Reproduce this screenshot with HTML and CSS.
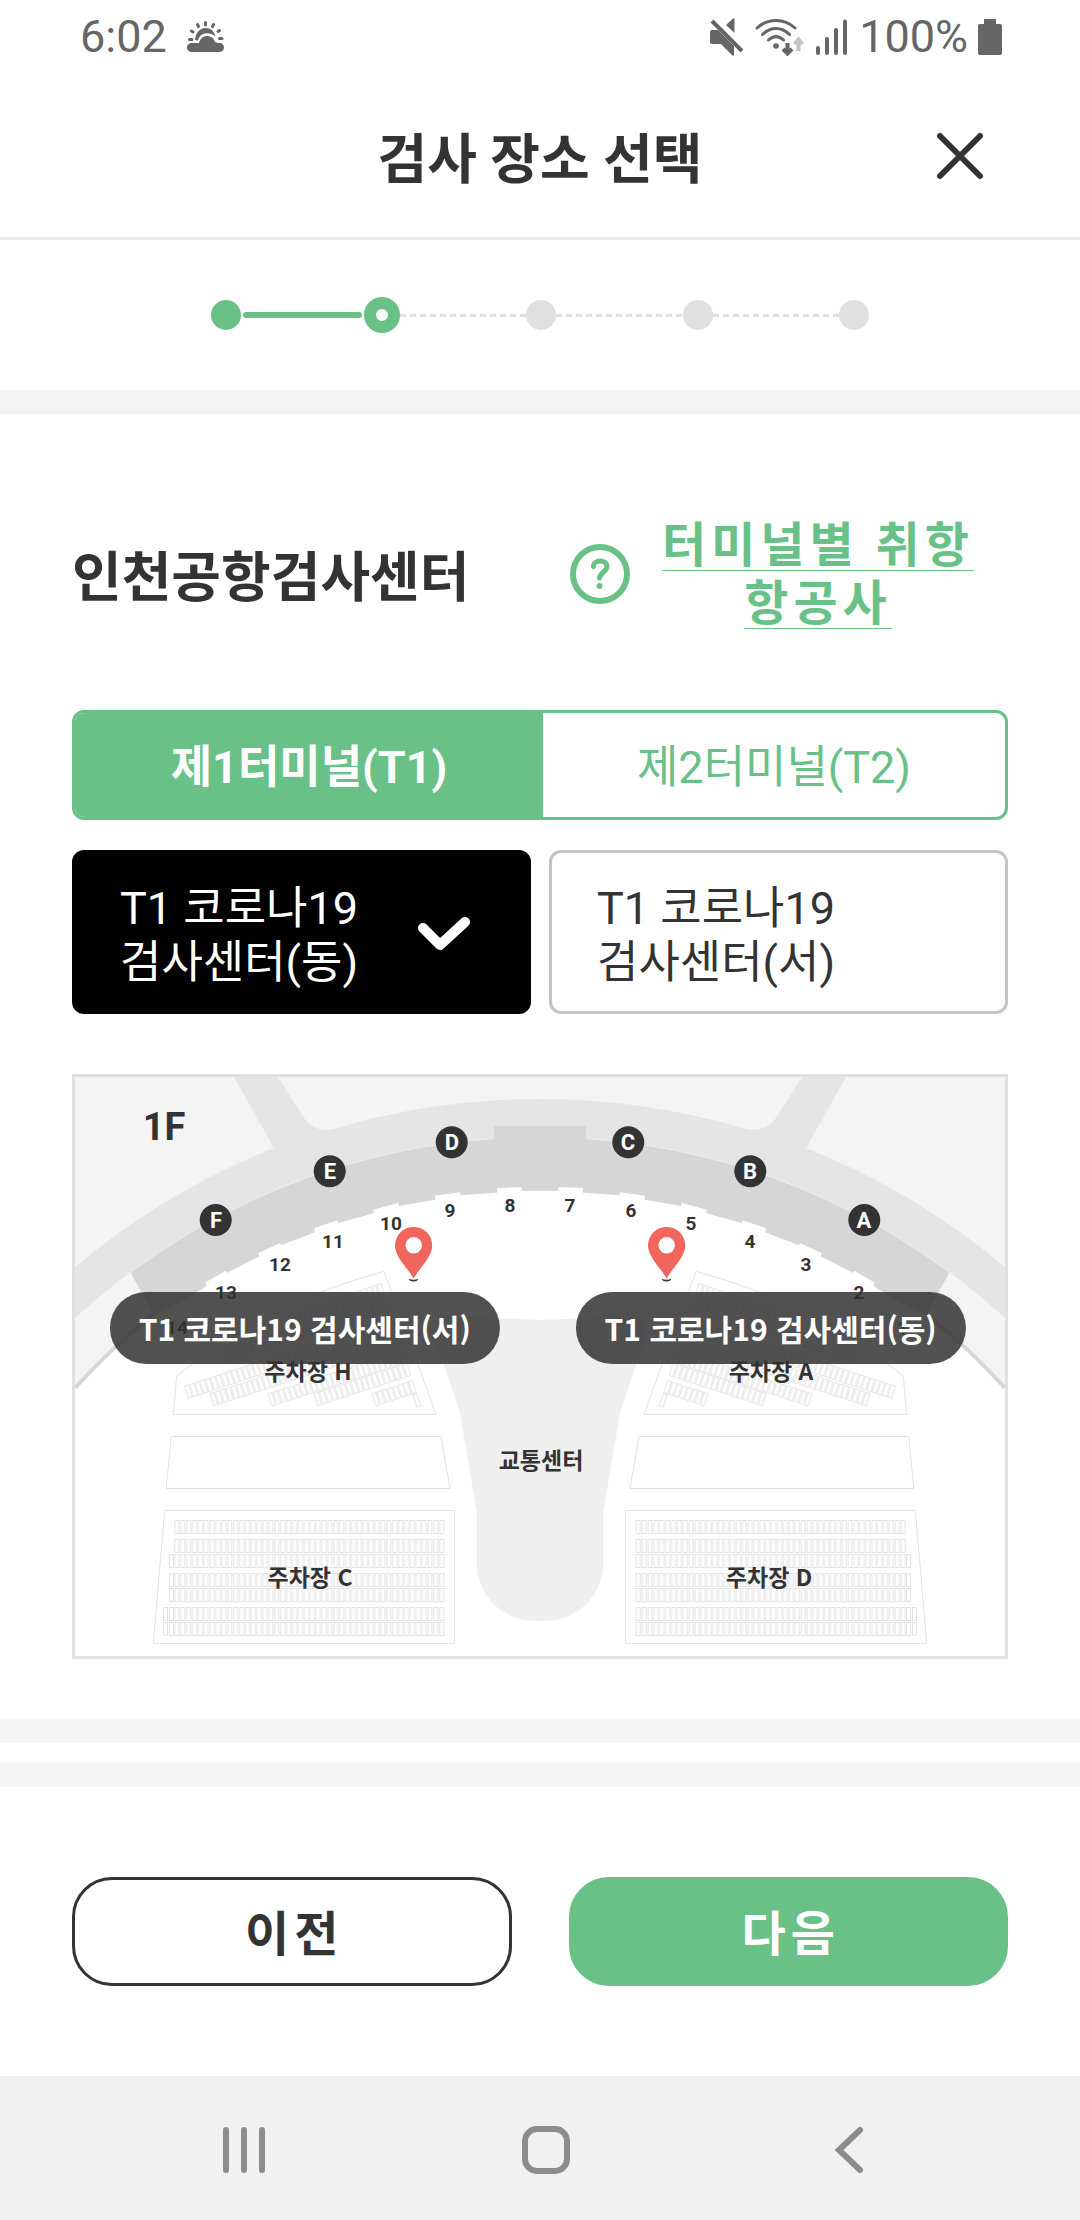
FILE: index.html
```html
<!DOCTYPE html>
<html lang="ko">
<head>
<meta charset="utf-8">
<meta name="viewport" content="width=device-width, initial-scale=1">
<title>검사 장소 선택</title>
<link rel="stylesheet" href="styles.css">
</head>
<body>
<div class="status">
  <div class="status-side">
    <span>6:02</span>
    <svg class="weather" width="38" height="34" viewBox="0 0 38 34" aria-hidden="true">
      <path d="M5 32a4.500 4.500 0 0 1-1-9h8c1-4 4-7 8-7s7 2.500 8 6l3 1h1.500a4.500 4.500 0 0 1 0 9z"/>
      <path d="M8 20C9 11 14 8 18.500 8c5 0 8.500 3 10 8.500C23 12 13 11.500 11 20.500z"/>
      <path class="rays" d="M18.500 2.500v2.500M10.500 4.500l1 2M26.500 4.500l-1 2M4.500 11l1.500 1M32.500 10.500l-1.500 1M2.500 19.500h2.500M32.500 18.500h2.500"/>
    </svg>
  </div>
  <div class="status-side status-right">
    <svg width="36" height="38" viewBox="0 0 36 38" aria-hidden="true">
      <path d="M1 14q0-2 2-2h6L25 28v9.500h-1.500L12 26H3q-2 0-2-2zM17 7l7-6.500h1.500V15z"/>
      <path class="line" d="M3 3l30 30"/>
    </svg>
    <svg class="wifi" width="50" height="38" viewBox="0 0 50 38" aria-hidden="true">
      <path class="arc" d="M2 10c11-10 27-10 38 0M7.500 16.500c8-8 19-8 27 0M13.500 22c5-4.500 10-4.500 15 0"/>
      <circle cx="21" cy="28" r="2.800"/>
      <path class="arrow" d="M32.500 25v10M28 31l4.500 4.500L37 31"/>
      <path class="arrow faint" d="M43.500 33V23M39.500 26l4-4.500 4 4.500"/>
    </svg>
    <svg class="signal" width="34" height="36" viewBox="0 0 34 36" aria-hidden="true">
      <path d="M3 29v5M12 20v14M21 11v23M30 2.500v31.500"/>
    </svg>
    <span>100%</span>
    <svg class="battery" width="24" height="36" viewBox="0 0 24 36" aria-hidden="true">
      <path d="M6 0h12v5h4q2 0 2 2v27q0 2-2 2H2q-2 0-2-2V7q0-2 2-2h4z"/>
    </svg>
  </div>
</div>

<header class="header">
  <h1 class="title">검사 장소 선택</h1>
  <button class="close" type="button" aria-label="닫기">
    <svg width="48" height="48" viewBox="0 0 48 48" aria-hidden="true"><path d="M4 4l40 40M44 4L4 44"/></svg>
  </button>
</header>

<main class="main">
  <div class="stepper">
    <span class="dot done"></span><span class="bar"></span>
    <span class="dot current"></span><span class="dash"></span>
    <span class="dot"></span><span class="dash"></span>
    <span class="dot"></span><span class="dash"></span>
    <span class="dot"></span>
  </div>
  <div class="band"></div>

  <section class="place">
    <div class="place-head">
      <h2 class="title">인천공항검사센터</h2>
      <div class="help">
        <svg width="60" height="60" viewBox="0 0 60 60" aria-hidden="true">
          <circle cx="30" cy="30" r="27" stroke-width="6"/>
          <path d="M23.500 22.500c0-7 13-7.500 13.500 0 0 5-7.500 6.500-7.500 11.500" stroke-width="5"/>
          <circle class="fill" cx="29.500" cy="42" r="3"/>
        </svg>
        <a class="help-link" href="#">터미널별 취항 항공사</a>
      </div>
    </div>

    <div class="tabs" role="tablist">
      <button class="tab on" type="button" role="tab" aria-selected="true">제1터미널(T1)</button>
      <button class="tab" type="button" role="tab" aria-selected="false">제2터미널(T2)</button>
    </div>

    <div class="centers">
      <button class="center on" type="button" aria-pressed="true">
        <span>T1 코로나19<br>검사센터(동)</span>
        <svg width="54" height="36" viewBox="0 0 54 36" aria-hidden="true"><path d="M6 12l17 17L48 6"/></svg>
      </button>
      <button class="center" type="button" aria-pressed="false">
        <span>T1 코로나19<br>검사센터(서)</span>
      </button>
    </div>

    <div class="map">
      <svg class="plan" viewBox="0 0 930 579" role="img" aria-label="1F">
        <defs>
          <pattern id="stall" patternUnits="userSpaceOnUse" x="99" y="0" width="5.890" height="20">
            <rect x="0.800" y="0.500" width="4" height="13" class="stroke"/>
          </pattern>
          <pattern id="stall-a" patternUnits="userSpaceOnUse" x="6" y="0" width="5.500" height="20">
            <rect x="0.800" y="0.500" width="3.800" height="13" class="stroke"/>
          </pattern>
          <rect id="row" x="99" y="0" width="271" height="14" fill="url(#stall)"/>
          <g id="road">
            <path class="road" d="M159 0L199 71A726 726 0 0 0 0 190V241A688 688 0 0 1 465 60V22A726 726 0 0 0 262 51Q240 58 227 38L203 0z"/>
            <path class="terminal" d="M465 49H419V62A688 688 0 0 0 55.700 195.700L79 238L100 226.300L101 228.700L131.700 209L130.700 205.300L151 193.700L152 196L184.300 179.300L183.300 176.300L205 166L206 168.300L240 155.300L239 151.300L262.300 143.300L263 146L299 136.300L298 132.700L323.300 126L324 129L360.300 122.700L360 118.700L385 115.300L385.300 118.300L422 115.700V111L446.700 110V113.700H466V49z"/>
            <path class="rim" d="M0 311A638.500 638.500 0 0 1 79 237"/>
            <path class="hub" d="M466 243Q415 241 378 238Q352 240 362 268L385 336L401.700 435V486A58 58 0 0 0 459.700 544H466z"/>
          </g>
          <g id="lots">
            <path class="stroke" d="M96.300 359.500H366L375 411.500H91.300zM89.700 433.500H379.500V566.500H78.300z"/>
            <use href="#row" y="443"/><use href="#row" y="462"/><use href="#row" y="477"/><use href="#row" y="496"/>
            <use href="#row" y="511"/><use href="#row" y="530"/><use href="#row" y="545"/>
            <path class="stroke" d="M94.500 477.500h4v13h-4zM94.500 496.500h4v13h-4zM94.500 511.500h4v13h-4zM94.500 530.500h4v13h-4zM94.500 545.500h4v13h-4zM88.500 530.500h4v13h-4zM88.500 545.500h4v13h-4z"/>
          </g>
          <g id="slant">
            <path class="stroke" d="M621 194.300Q738 226 828.300 299L831.700 337.500H569z"/>
            <g transform="translate(621 194.300) rotate(18)" fill="url(#stall-a)">
              <rect x="6" width="99" height="14" transform="translate(0 10)"/>
              <rect x="6" width="176" height="14" transform="translate(0 25)"/>
              <rect x="6" width="220" height="14" transform="translate(0 47)"/>
              <rect x="6" width="198" height="14" transform="translate(0 62)"/>
              <rect x="6" width="143" height="14" transform="translate(0 80)"/>
              <rect x="6" width="99" height="14" transform="translate(0 94)"/>
              <rect x="6" width="44" height="14" transform="translate(0 112)"/>
              <rect x="6" width="5.500" height="14" transform="translate(0 126)"/>
            </g>
          </g>
        </defs>
        <rect class="ground" width="930" height="579"/>
        <circle class="white" cx="465" cy="748" r="640"/>
        <rect class="white" y="310" width="930" height="269"/>
        <use href="#road"/><use href="#road" transform="matrix(-1 0 0 1 930 0)"/>
        <use href="#lots"/><use href="#lots" transform="matrix(-1 0 0 1 930 0)"/>
        <use href="#slant"/><use href="#slant" transform="matrix(-1 0 0 1 930 0)"/>
        <text class="floor" x="89" y="63">1F</text>
        <g class="gate">
          <circle cx="140.700" cy="143" r="16"/><circle cx="254.700" cy="94.300" r="16"/><circle cx="376.700" cy="65.300" r="16"/>
          <circle cx="553.300" cy="65.300" r="16"/><circle cx="675.300" cy="94.300" r="16"/><circle cx="789.300" cy="143" r="16"/>
          <text x="141" y="151">F</text><text x="255" y="102">E</text><text x="377" y="73">D</text>
          <text x="553" y="73">C</text><text x="675" y="102">B</text><text x="789" y="151">A</text>
        </g>
        <g class="num">
          <text x="102" y="257">14</text><text x="151" y="222">13</text><text x="205" y="194">12</text><text x="258" y="171">11</text>
          <text x="316" y="153">10</text><text x="375" y="140">9</text><text x="435" y="135">8</text><text x="495" y="135">7</text>
          <text x="556" y="140">6</text><text x="616" y="153">5</text><text x="675" y="171">4</text><text x="731" y="194">3</text>
          <text x="784" y="222">2</text><text x="828" y="257">1</text>
        </g>
        <g class="lot">
          <text x="233" y="303">주차장 H</text><text x="696" y="303">주차장 A</text>
          <text x="235" y="509">주차장 C</text><text x="694" y="509">주차장 D</text><text x="466" y="392">교통센터</text>
        </g>
        <g id="pin">
          <path class="mark" d="M334 202q4.500 1.500 9 0v1q-4.500 3-9 0z"/>
          <path class="pin" fill-rule="evenodd" d="M338.700 201.500C332 190 320 180 320 168.500a18.600 18.600 0 0 1 37.200 0C357.200 180 345 190 338.700 201.500zM338.700 160a8.300 8.300 0 1 0 0 16.600a8.300 8.300 0 1 0 0-16.600z"/>
        </g>
        <use href="#pin" x="253"/>
      </svg>
      <button class="label west" type="button">T1 코로나19 검사센터(서)</button>
      <button class="label east" type="button">T1 코로나19 검사센터(동)</button>
    </div>
  </section>

  <div class="band"></div>
  <div class="band second"></div>

  <div class="actions">
    <button class="action" type="button">이전</button>
    <button class="action next" type="button">다음</button>
  </div>
</main>

<nav class="nav">
  <button type="button" aria-label="최근 앱"><svg width="48" height="48" viewBox="0 0 48 48"><path d="M6 4v40M24 4v40M42 4v40"/></svg></button>
  <button type="button" aria-label="홈"><svg width="48" height="48" viewBox="0 0 48 48"><rect x="3" y="3" width="42" height="42" rx="12"/></svg></button>
  <button type="button" aria-label="뒤로"><svg width="48" height="48" viewBox="0 0 48 48"><path d="M36 4L15 24l21 20"/></svg></button>
</nav>
</body>
</html>
```
FILE: styles.css
```css
:root {
  --green: #69c188;
  --ink: #333;
}

* {
  box-sizing: border-box;
}

body {
  margin: 0;
  min-height: 100vh;
  display: flex;
  flex-direction: column;
  background: #fff;
  color: var(--ink);
  font-family: Roboto, "Noto Sans CJK KR", sans-serif;
  font-size: 45px;
  line-height: 54px;
}

button {
  margin: 0;
  padding: 0;
  border: 0;
  background: none;
  color: inherit;
  font: inherit;
}

svg {
  display: block;
  flex: none;
}

/* status bar */
.status {
  display: flex;
  justify-content: space-between;
  align-items: center;
  height: 74px;
  padding: 0 78px 0 80px;
  color: #666;
}

.status-side {
  display: flex;
  align-items: center;
  gap: 10px;
}

.status svg {
  fill: #666;
  stroke: none;
}

.weather {
  margin-left: 10px;
}

.weather .rays,
.status .line,
.status .arc,
.status .arrow,
.status .signal {
  fill: none;
  stroke: #666;
  stroke-width: 4;
  stroke-linecap: round;
}

.status .rays {
  stroke-width: 3;
}

.status .line,
.status .arrow {
  stroke-linecap: butt;
}

.status .arc {
  stroke-width: 3;
}

.status .faint {
  stroke: #c4c4c4;
}

/* header */
.header {
  display: grid;
  grid-template-columns: 1fr auto 1fr;
  align-items: center;
  height: 166px;
  padding: 0 96px;
  border-bottom: 3px solid #eaeaea;
}

.title {
  margin: 0;
  padding-top: 10px;
  font-size: 54px;
  line-height: 78px;
  font-weight: 700;
  white-space: nowrap;
}

.header .title {
  grid-column: 2;
}

.close {
  justify-self: end;
}

.close svg {
  fill: none;
  stroke: var(--ink);
  stroke-width: 6;
  stroke-linecap: round;
}

/* progress */
.stepper {
  display: flex;
  align-items: center;
  width: 61%;
  height: 150px;
  margin: 0 auto;
}

.dot {
  width: 30px;
  height: 30px;
  border-radius: 50%;
  background: #e0e0e0;
}

.dot.done {
  background: var(--green);
}

.dot.current {
  width: 36px;
  height: 36px;
  border: 12px solid var(--green);
  background: #fff;
}

.bar {
  flex: 119 1 0;
  height: 6px;
  margin: 0 2px;
  border-radius: 3px;
  background: var(--green);
}

.dash {
  flex: 126 1 0;
  height: 3px;
  background: repeating-linear-gradient(90deg, #e0e0e0 0 6px, #fff 6px 10px);
}

.band {
  height: 24px;
  background: #f4f4f4;
}

.second {
  margin-top: 20px;
}

/* test place */
.place {
  padding: 102px 72px 60px;
}

.place-head {
  display: flex;
  justify-content: space-between;
  align-items: center;
  height: 116px;
}

.help {
  display: flex;
  align-items: center;
  width: 438px;
}

.help svg {
  fill: none;
  stroke: var(--green);
  stroke-linecap: round;
}

.help .fill {
  fill: var(--green);
  stroke: none;
}

.help-link {
  flex: 1;
  padding: 2px 28px 0 26px;
  color: var(--green);
  font-size: 48px;
  line-height: 58px;
  font-weight: 700;
  letter-spacing: 5px;
  text-align: center;
  text-decoration: underline 1px;
  text-underline-offset: 8px;
  word-break: keep-all;
}

.tabs {
  display: flex;
  height: 110px;
  margin-top: 78px;
  border: 3px solid var(--green);
  border-radius: 12px;
  overflow: hidden;
}

.tab {
  flex: 77 1 0;
  padding-top: 6px;
  color: var(--green);
}

.tab.on {
  flex-grow: 78;
  background: var(--green);
  color: #fff;
  font-weight: 700;
}

.centers {
  display: grid;
  grid-template-columns: 1fr 1fr;
  gap: 18px;
  margin-top: 30px;
}

.center {
  display: flex;
  justify-content: space-between;
  align-items: center;
  height: 164px;
  padding: 4px 57px 0 45px;
  border: 3px solid #c4c4c4;
  border-radius: 12px;
  text-align: left;
}

.center span {
  padding-top: 4px;
}

.center.on {
  border-color: #000;
  background: #000;
  color: #fff;
}

.center svg {
  fill: none;
  stroke: #fff;
  stroke-width: 10;
  stroke-linecap: round;
  stroke-linejoin: round;
}

/* map */
.map {
  position: relative;
  margin-top: 60px;
  border: 3px solid #e0e0e0;
}

.plan {
  width: 100%;
  height: auto;
}

.ground { fill: #f4f4f4; }
.white { fill: #fff; }
.road { fill: #e5e5e5; }
.terminal { fill: #d6d6d6; }
.hub { fill: #efefef; }

.rim {
  fill: none;
  stroke: #d6d6d6;
  stroke-width: 4;
}

.stroke {
  fill: none;
  stroke: #e2e2e2;
  stroke-width: 1;
}

.plan text {
  fill: var(--ink);
  font-weight: 700;
  text-anchor: middle;
}

.plan .floor {
  font-size: 38px;
}

.gate {
  fill: var(--ink);
  font-size: 22px;
}

.plan .gate text {
  fill: #fff;
}

.num {
  font-size: 19px;
}

.lot {
  font-family: "Noto Sans CJK KR", sans-serif;
  font-size: 23px;
}

.mark {
  fill: var(--ink);
}

.pin {
  fill: #f1665c;
}

.label {
  position: absolute;
  top: 37.2%;
  transform: translateX(-50%);
  padding: 9px 29px;
  border-radius: 36px;
  background: rgba(51, 51, 51, 0.85);
  color: #fff;
  font-family: "Noto Sans CJK KR", sans-serif;
  font-size: 30px;
  font-weight: 700;
  white-space: nowrap;
}

.west { left: 24.7%; }
.east { left: 74.8%; }

/* actions */
.actions {
  display: grid;
  grid-template-columns: 1fr 1fr;
  gap: 57px;
  padding: 90px 72px;
}

.action {
  height: 109px;
  padding: 6px 0 0 5px;
  border: 3px solid var(--ink);
  border-radius: 40px;
  font-size: 48px;
  font-weight: 700;
  letter-spacing: 5px;
}

.next {
  border-color: var(--green);
  background: var(--green);
  color: #fff;
}

/* system navigation */
.nav {
  display: flex;
  justify-content: space-between;
  align-items: center;
  height: 144px;
  margin-top: auto;
  padding: 4px 208px 0 220px;
  background: #f1f1f1;
}

.nav svg {
  fill: none;
  stroke: #8c8c8c;
  stroke-width: 6;
  stroke-linecap: round;
}
```
